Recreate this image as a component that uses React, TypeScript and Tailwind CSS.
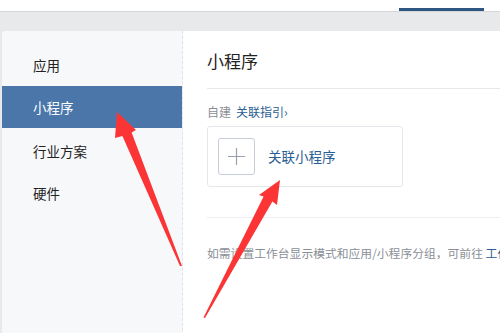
import React from "react";

const font = { fontFamily: '"Noto Sans CJK SC", "Noto Sans", sans-serif' };

const menu = ["应用", "小程序", "行业方案", "硬件"];

function Arrows() {
  return (
    <svg
      className="pointer-events-none absolute left-0 top-0"
      width="500"
      height="333"
      viewBox="0 0 500 333"
    >
      <polygon
        fill="#fb3535"
        points="117,112 136,130 131.6,132.5 182,266 180,266 122.4,136 115,138"
      />
      <polygon
        fill="#fb3535"
        points="280,180 277,205 272.4,201.4 205,318 203.5,317.5 263.6,196.6 259,195"
      />
    </svg>
  );
}

export default function App() {
  return (
    <div className="relative h-[333px] w-[500px] overflow-hidden bg-[#e8e9eb]" style={font}>
      {/* top bar */}
      <div className="flex h-[12px] justify-end border-b border-[#d4d6d9] bg-white pr-[16px]">
        <div className="mt-[8px] h-[3px] w-[85px] bg-[#2f5583]" />
      </div>

      <div className="pl-[2px] pt-[19px]">
        <div className="flex h-[320px] overflow-hidden rounded-tl-[4px] bg-white">
          {/* sidebar */}
          <div className="w-[181px] shrink-0 border-r border-dashed border-[#dde2ea] bg-[#f7f8fa] pt-[13px]">
            {menu.map((m, i) => (
              <div
                key={m}
                className={
                  "flex h-[42px] items-center pl-[31px] text-[13.5px] " +
                  (i === 1 ? "bg-[#4a76a9] text-white" : "text-[#222]") +
                  (i > 1 ? " pt-[4px]" : "")
                }
              >
                {m}
              </div>
            ))}
          </div>

          {/* content */}
          <div className="flex-1 pl-[24px] pt-[18px]">
            <div className="h-[24px] text-[17px] leading-[24px] text-[#222]">小程序</div>
            <div className="mt-[15px] h-px bg-[#e6e8eb]" />
            <div className="mt-[15px] flex h-[16px] items-center gap-[5px] text-[12px] leading-[16px]">
              <span className="text-[#8a8f96]">自建</span>
              <span className="text-[#2b5d92]">关联指引›</span>
            </div>
            <div className="mt-[6px] flex h-[61px] w-[196px] items-center rounded-[3px] border border-[#e4e7ec] pl-[10px]">
              <div className="flex h-[37px] w-[37px] items-center justify-center rounded-[3px] border border-[#c6ccd6]">
                <svg width="19" height="19" viewBox="0 0 19 19">
                  <path d="M9.5 1v17M1 9.5h17" stroke="#9aa1ad" strokeWidth="1.2" />
                </svg>
              </div>
              <span className="ml-[13px] text-[13.5px] text-[#2b5d92]">关联小程序</span>
            </div>
            <div className="mt-[30px] h-px bg-[#eceef1]" />
            <div className="mt-[27px] whitespace-nowrap text-[11.8px] leading-[16px] text-[#8a8f96]">
              如需设置工作台显示模式和应用/小程序分组，可前往 <span className="text-[#2b5d92]">工作台</span>
            </div>
          </div>
        </div>
      </div>

      <Arrows />
    </div>
  );
}
